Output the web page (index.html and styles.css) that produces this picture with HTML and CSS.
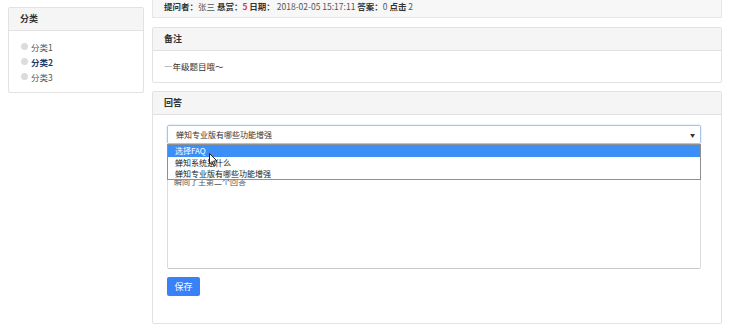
FILE: index.html
```html
<!DOCTYPE html>
<html lang="zh">
<head>
    <meta charset="UTF-8">
    <title>问答</title>
    <link rel="stylesheet" href="styles.css">
</head>
<body>
    <div class="page">
        <div class="sidebar">
            <div class="panel">
                <div class="panel-heading">分类</div>
                <div class="panel-body cat-list">
                    <div class="cat"><span class="dot"></span>分类1</div>
                    <div class="cat active"><span class="dot"></span>分类2</div>
                    <div class="cat"><span class="dot"></span>分类3</div>
                </div>
            </div>
        </div>

        <div class="main">
            <div class="info-bar">
                <b>提问者：</b>张三 <b>悬赏：</b><span class="red">5</span> <b>日期：</b> 2018-02-05 15:17:11 <b>答案：</b>0 <b>点击</b> 2
            </div>

            <div class="panel">
                <div class="panel-heading">备注</div>
                <div class="panel-body note">—年级题目哦～</div>
            </div>

            <div class="panel">
                <div class="panel-heading">回答</div>
                <div class="panel-body answer">
                    <div class="select-wrap">
                        <div class="select">
                            <span>蝉知专业版有哪些功能增强</span>
                            <span class="arrow">▼</span>
                        </div>
                        <ul class="options">
                            <li class="selected">选择FAQ</li>
                            <li>蝉知系统是什么</li>
                            <li>蝉知专业版有哪些功能增强</li>
                        </ul>
                        <svg class="cursor" width="9" height="14" viewBox="0 0 9 14">
                            <polygon points="0.5,0.5 0.5,11 3,8.5 5,13 6.5,12.3 4.6,8 8,8" fill="#fff" stroke="#222" stroke-width="1"/>
                        </svg>
                    </div>
                    <textarea class="editor">瞬间了主第二个回答</textarea>
                    <button class="btn">保存</button>
                </div>
            </div>
        </div>
    </div>
</body>
</html>
```

FILE: styles.css
```css
body {
    margin: 0;
    background-color: #fff;
    font-family: "Noto Sans CJK SC", "Liberation Sans", sans-serif;
    font-size: 9px;
    color: #333;
}

.page {
    display: flex;
    align-items: flex-start;
    padding-left: 8px;
}

.sidebar {
    width: 136px;
    margin-top: 7px;
    margin-right: 8px;
}

.main {
    width: 570px;
}

.panel {
    background-color: #fff;
    border: 1px solid #e2e2e2;
    border-radius: 2px;
    margin-bottom: 8px;
}

.panel-heading {
    height: 22px;
    line-height: 22px;
    padding: 0 11px;
    background-color: #f5f5f5;
    border-bottom: 1px solid #e2e2e2;
    font-weight: bold;
    color: #333;
}

.cat-list {
    padding: 8px 12px;
}

.cat {
    display: flex;
    align-items: center;
    height: 15px;
    font-size: 8.5px;
    color: #555;
}

.cat.active {
    font-weight: bold;
    color: #1e3a66;
}

.dot {
    width: 7px;
    height: 7px;
    border-radius: 50%;
    background-color: #dcdcdc;
    margin-right: 3px;
}

.info-bar {
    height: 17px;
    line-height: 12px;
    padding: 0 11px;
    background-color: #f7f7f7;
    border: 1px solid #e6e6e6;
    border-top: none;
    margin-bottom: 9px;
    font-size: 8.5px;
    color: #555;
}

.info-bar b {
    color: #333;
}

.red {
    color: #d9363e;
    font-weight: bold;
}

.note {
    height: 31px;
    line-height: 31px;
    padding: 0 11px;
    font-size: 8.5px;
}

.answer {
    padding: 10px 20px 27px 14px;
}

.select-wrap {
    position: relative;
}

.select {
    display: flex;
    justify-content: space-between;
    align-items: center;
    height: 17px;
    padding: 0 5px 0 8px;
    border: 1px solid #a9c4ec;
    border-radius: 2px;
    box-shadow: 0 0 2px rgba(80, 140, 230, 0.4);
    font-size: 8px;
}

.arrow {
    font-size: 5px;
    color: #333;
}

.options {
    position: absolute;
    left: 0;
    right: 0;
    top: 19px;
    margin: 0;
    padding: 0;
    list-style: none;
    background-color: #fff;
    border: 1px solid #8f8f8f;
    z-index: 2;
}

.options li {
    height: 11px;
    line-height: 11px;
    padding: 0 7px;
    font-size: 8px;
    color: #222;
}

.options li.selected {
    height: 12px;
    line-height: 12px;
    background-color: #3b8ff6;
    color: #fff;
}

.cursor {
    position: absolute;
    left: 42px;
    top: 28px;
    z-index: 3;
}

.editor {
    display: block;
    box-sizing: border-box;
    width: 100%;
    height: 119px;
    margin-top: 6px;
    padding: 25px 6px 0;
    border: 1px solid #dcdcdc;
    border-bottom-color: #c8c8c8;
    border-radius: 2px;
    font-family: inherit;
    font-size: 8px;
    color: #555;
    resize: none;
}

.btn {
    display: block;
    margin-top: 8px;
    width: 33px;
    height: 19px;
    padding: 0;
    border: none;
    border-radius: 2px;
    background-color: #3a80f6;
    color: #fff;
    font-family: inherit;
    font-size: 9px;
}
```
